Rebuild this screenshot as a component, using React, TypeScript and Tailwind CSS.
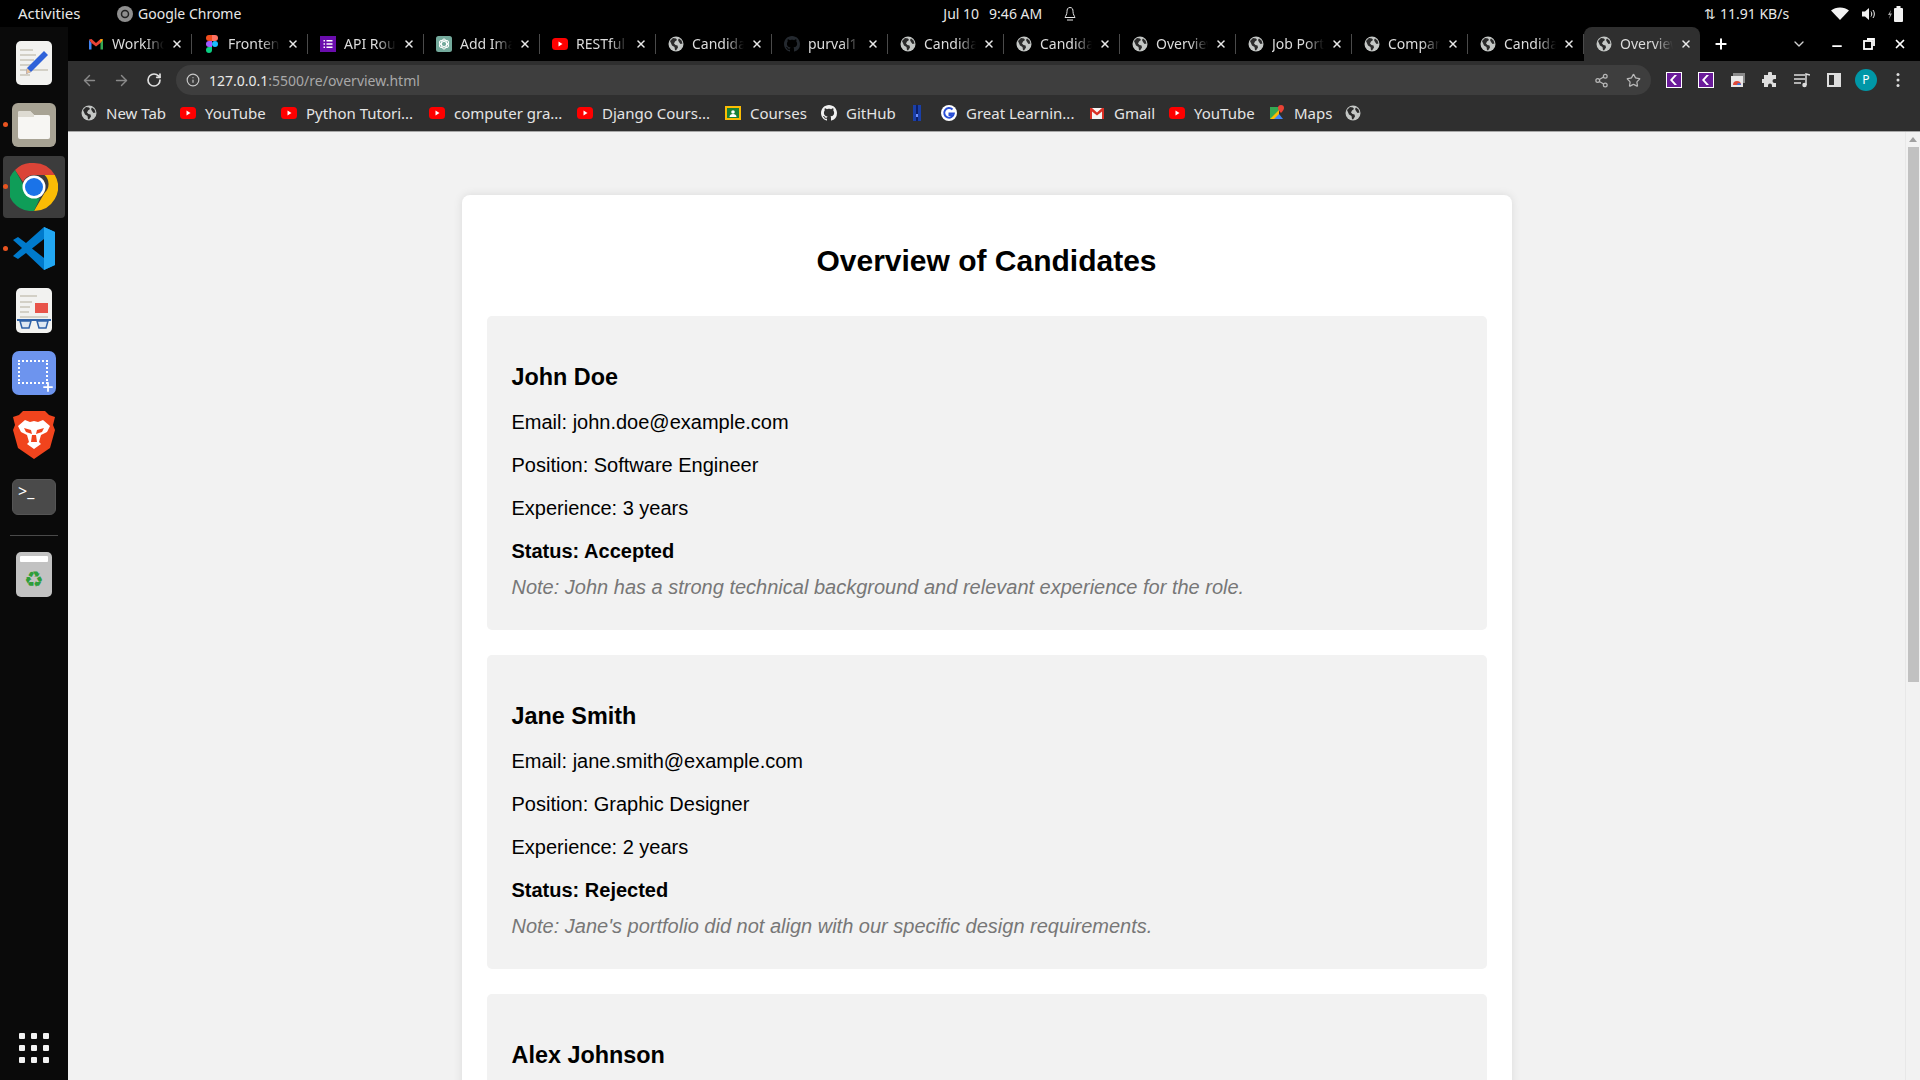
import { ArrowLeft, ArrowRight, ChevronDown, Info, Minus, Plus, RotateCw, Share2, Star, X } from "lucide-react";

const uiFont = "font-['Noto_Sans',sans-serif]";

function Globe({ className = "h-4 w-4" }: { className?: string }) {
  return (
    <svg viewBox="0 0 16 16" className={`${className} shrink-0`}>
      <circle cx="8" cy="8" r="7.5" fill="#c4c7c5" />
      <path d="M2 5l3-3 3 .5 1 1.500-2 1.500-1 2 1.500 1.500 2 .5.5 2-2 3-1-.5-.5-3-2.500-1.500zM11 2.500l2.500 2 1 3-2 .5-1.500-2-1-2z" fill="#2b2b2b" />
    </svg>
  );
}

function YouTubeIcon() {
  return (
    <svg viewBox="0 0 16 16" className="h-4 w-4 shrink-0">
      <rect x="0" y="2" width="16" height="12" rx="3.500" fill="#f00" />
      <path d="M6.500 5.500v5l4-2.500z" fill="#fff" />
    </svg>
  );
}

function GmailIcon() {
  return (
    <svg viewBox="0 0 16 16" className="h-4 w-4 shrink-0">
      <path d="M1 3.500v10h2.500V7z" fill="#4285f4" />
      <path d="M15 3.500v10h-2.500V7z" fill="#34a853" />
      <path d="M1 3.500 3.500 3 8 7l4.500-4 2.500.5L12.500 7 8 10.500 3.500 7z" fill="#ea4335" />
      <path d="M12.500 3 15 3.500 12.500 7z" fill="#fbbc04" />
    </svg>
  );
}

function GmailBookmark() {
  return (
    <svg viewBox="0 0 16 16" className="h-4 w-4 shrink-0">
      <rect x="1" y="3" width="14" height="11" fill="#f5f5f5" />
      <path d="M1 3h2l5 4.500L13 3h2v11h-2V6.500L8 10.500 3 6.500V14H1z" fill="#d93025" />
    </svg>
  );
}

function FigmaIcon() {
  return (
    <svg viewBox="0 0 12 18" className="h-[18px] w-3 shrink-0">
      <path d="M3 0h3v6H3a3 3 0 0 1 0-6z" fill="#f24e1e" />
      <path d="M6 0h3a3 3 0 0 1 0 6H6z" fill="#ff7262" />
      <path d="M3 6h3v6H3a3 3 0 0 1 0-6z" fill="#a259ff" />
      <circle cx="9" cy="9" r="3" fill="#1abcfe" />
      <path d="M3 12h3v3a3 3 0 1 1-3-3z" fill="#0acf83" />
    </svg>
  );
}

function ListIcon() {
  return (
    <svg viewBox="0 0 16 16" className="h-4 w-4 shrink-0">
      <rect width="16" height="16" fill="#6a0dad" />
      <path d="M3.500 4h1.500v1.500H3.500zM6.500 4h6v1.500h-6zM3.500 7.250h1.500v1.500H3.500zM6.500 7.250h6v1.500h-6zM3.500 10.500h1.500V12H3.500zM6.500 10.500h6V12h-6z" fill="#fff" />
    </svg>
  );
}

function GptIcon() {
  return (
    <svg viewBox="0 0 16 16" className="h-4 w-4 shrink-0">
      <rect width="16" height="16" rx="2.500" fill="#74aa9c" />
      <g fill="none" stroke="#fff" strokeWidth="1">
        <ellipse cx="8" cy="8" rx="2.500" ry="5" />
        <ellipse cx="8" cy="8" rx="2.500" ry="5" transform="rotate(60 8 8)" />
        <ellipse cx="8" cy="8" rx="2.500" ry="5" transform="rotate(120 8 8)" />
      </g>
    </svg>
  );
}

function GithubIcon({ fill }: { fill: string }) {
  return (
    <svg viewBox="0 0 16 16" className="h-4 w-4 shrink-0" fill={fill}>
      <path d="M8 0C3.580 0 0 3.580 0 8c0 3.540 2.290 6.530 5.470 7.590.4.070.55-.17.55-.38 0-.19-.01-.82-.01-1.490-2.010.37-2.530-.49-2.690-.94-.09-.23-.48-.94-.82-1.130-.28-.15-.68-.52-.01-.53.63-.01 1.080.58 1.230.82.720 1.210 1.870.87 2.330.66.070-.52.280-.87.510-1.070-1.780-.2-3.640-.89-3.640-3.950 0-.87.310-1.590.820-2.150-.08-.2-.36-1.020.08-2.120 0 0 .67-.21 2.200.82.640-.18 1.320-.27 2-.27s1.360.09 2 .27c1.530-1.040 2.200-.82 2.200-.82.440 1.100.160 1.920.080 2.120.510.560.820 1.270.820 2.150 0 3.070-1.870 3.750-3.650 3.950.290.250.540.730.540 1.480 0 1.070-.01 1.930-.01 2.200 0 .210.150.460.550.380A8.010 8.010 0 0 0 16 8c0-4.420-3.580-8-8-8z" />
    </svg>
  );
}

function CoursesIcon() {
  return (
    <svg viewBox="0 0 16 16" className="h-4 w-4 shrink-0">
      <rect x="0" y="1" width="16" height="14" fill="#fbbc04" />
      <rect x="2" y="3" width="12" height="10" fill="#188038" />
      <circle cx="8" cy="7" r="1.800" fill="#fff" />
      <path d="M4.500 12c0-2 1.500-3 3.500-3s3.500 1 3.500 3z" fill="#fff" />
    </svg>
  );
}

function BlueTabIcon() {
  return (
    <svg viewBox="0 0 16 16" className="h-4 w-4 shrink-0">
      <rect x="4" y="0" width="8" height="16" fill="#1a3fa8" />
      <rect x="7" y="0" width="2" height="16" fill="#0d1f66" />
      <rect x="7" y="9" width="2" height="3" fill="#6f8fff" />
    </svg>
  );
}

function GoogleIcon() {
  return (
    <svg viewBox="0 0 16 16" className="h-4 w-4 shrink-0">
      <circle cx="8" cy="8" r="8" fill="#fff" />
      <path d="M11.500 4.500A4.800 4.800 0 1 0 12.800 8.500H8.500v1.500h2.400" fill="none" stroke="#2a4fd6" strokeWidth="2" />
    </svg>
  );
}

function MapsIcon() {
  return (
    <svg viewBox="0 0 16 16" className="h-4 w-4 shrink-0">
      <path d="M1 2h9v12H1z" fill="#34a853" />
      <path d="M1 14 10 5v9z" fill="#fbbc04" />
      <path d="M5 14l5-5 4 5z" fill="#4285f4" />
      <path d="M12 0a3 3 0 0 1 3 3c0 2-3 5-3 5S9 5 9 3a3 3 0 0 1 3-3z" fill="#ea4335" />
    </svg>
  );
}

const tabs = [
  { label: "WorkIndia", icon: <GmailIcon /> },
  { label: "Frontend", icon: <FigmaIcon /> },
  { label: "API Routes", icon: <ListIcon /> },
  { label: "Add Image", icon: <GptIcon /> },
  { label: "RESTful API", icon: <YouTubeIcon /> },
  { label: "Candidates", icon: <Globe /> },
  { label: "purval1", icon: <GithubIcon fill="#24292f" /> },
  { label: "Candidates", icon: <Globe /> },
  { label: "Candidates", icon: <Globe /> },
  { label: "Overview", icon: <Globe /> },
  { label: "Job Portal", icon: <Globe /> },
  { label: "Company", icon: <Globe /> },
  { label: "Candidates", icon: <Globe /> },
  { label: "Overview", icon: <Globe />, active: true },
];

const bookmarks = [
  { label: "New Tab", icon: <Globe />, width: "w-[99px]" },
  { label: "YouTube", icon: <YouTubeIcon />, width: "w-[101px]" },
  { label: "Python Tutori...", icon: <YouTubeIcon />, width: "w-[148px]" },
  { label: "computer gra...", icon: <YouTubeIcon />, width: "w-[148px]" },
  { label: "Django Cours...", icon: <YouTubeIcon />, width: "w-[148px]" },
  { label: "Courses", icon: <CoursesIcon />, width: "w-[96px]" },
  { label: "GitHub", icon: <GithubIcon fill="#f1f1f1" />, width: "w-[88px]" },
  { label: "", icon: <BlueTabIcon />, width: "w-[32px]" },
  { label: "Great Learnin...", icon: <GoogleIcon />, width: "w-[148px]" },
  { label: "Gmail", icon: <GmailBookmark />, width: "w-[80px]" },
  { label: "YouTube", icon: <YouTubeIcon />, width: "w-[100px]" },
  { label: "Maps", icon: <MapsIcon />, width: "w-[76px]" },
  { label: "", icon: <Globe />, width: "w-[32px]" },
];

const candidates = [
  {
    name: "John Doe",
    email: "john.doe@example.com",
    position: "Software Engineer",
    experience: "3 years",
    status: "Accepted",
    note: "Note: John has a strong technical background and relevant experience for the role.",
  },
  {
    name: "Jane Smith",
    email: "jane.smith@example.com",
    position: "Graphic Designer",
    experience: "2 years",
    status: "Rejected",
    note: "Note: Jane's portfolio did not align with our specific design requirements.",
  },
];

function TopBar() {
  return (
    <div className={`flex h-[27px] shrink-0 items-center bg-black text-[14px] text-[#e8e8e8] ${uiFont}`}>
      <span className="ml-[18px] w-[99px] text-[15px]">Activities</span>
      <svg viewBox="0 0 16 16" className="mr-[2px] h-4 w-4">
        <circle cx="8" cy="8" r="8" fill="#8f8f8f" />
        <circle cx="8" cy="8" r="3.500" fill="none" stroke="#222" strokeWidth="1.500" />
      </svg>
      <span className="ml-[3px]">Google Chrome</span>
      <div className="ml-[702px] flex w-[127px] gap-[10px] whitespace-nowrap">
        <span>Jul 10</span>
        <span>9:46 AM</span>
      </div>
      <svg viewBox="0 0 16 16" className="ml-[-8px] h-4 w-4" fill="none" stroke="#e8e8e8" strokeWidth="1">
        <path d="M8 1.500c-2.500 0-3 2-3 4 0 3-1.500 4.500-2 6h10c-.5-1.500-2-3-2-6 0-2-.5-4-3-4zM5 14h6" />
      </svg>
      <span className="ml-[626px] whitespace-nowrap">⇅ 11.91 KB/s</span>
      <svg viewBox="0 0 18 16" className="ml-[42px] h-4 w-[18px]" fill="#f2f2f2">
        <path d="M9 14 0 4.500C2.500 2.500 5.500 1.500 9 1.500s6.500 1 9 3z" />
      </svg>
      <svg viewBox="0 0 16 16" className="ml-[12px] h-4 w-4" fill="#f2f2f2">
        <path d="M1 5.500h3L8 2v12l-4-3.500H1z" />
        <path d="M10 5.500c1 1.500 1 3.500 0 5M12 4c1.800 2.200 1.800 5.800 0 8" stroke="#f2f2f2" fill="none" />
      </svg>
      <svg viewBox="0 0 16 18" className="ml-[11px] h-[18px] w-4" fill="#f2f2f2">
        <path d="M3 5 0 10h2l-1 4 3-5.500H2z" fill="#aaa" />
        <rect x="6" y="3" width="9" height="14" rx="1" />
        <rect x="8.500" y="1" width="4" height="2" />
      </svg>
    </div>
  );
}

function Dock() {
  return (
    <aside className="relative flex w-[68px] shrink-0 flex-col items-center bg-[#0a0a0a]">
      {/* running app markers */}
      <span className="absolute left-[3px] top-[95px] h-[5px] w-[5px] rounded-full bg-[#e95420]" />
      <span className="absolute left-[3px] top-[157px] h-[5px] w-[5px] rounded-full bg-[#e95420]" />
      <span className="absolute left-[3px] top-[219px] h-[5px] w-[5px] rounded-full bg-[#e95420]" />

      <svg viewBox="0 0 36 44" className="mt-[14px] h-[44px] w-[36px]">
        <rect width="36" height="44" rx="5" fill="#f2f2f0" />
        <path d="M4 9h13M4 14h16M4 19h14M4 24h13M4 29h28M4 34h10" stroke="#c9c5b8" strokeWidth="1.500" />
        <path d="M28 10l4 4-17 17-5 2 1-6z" fill="#2f62d9" />
        <path d="M11 27l4 4-5 2z" fill="#e8c39a" />
      </svg>
      <div className="mt-[18px] flex h-[44px] w-[44px] items-center justify-center rounded-[6px] bg-[#a8a394]">
        <svg viewBox="0 0 32 28" className="h-[28px] w-[32px]">
          <path d="M0 2a2 2 0 0 1 2-2h10l4 4h14a2 2 0 0 1 2 2v20a2 2 0 0 1-2 2H2a2 2 0 0 1-2-2z" fill="#f7f6f3" />
          <path d="M0 6V2a2 2 0 0 1 2-2h10l4 4v2z" fill="#dedbd2" />
        </svg>
      </div>
      <div className="mt-[9px] flex h-[62px] w-[62px] items-center justify-center rounded-[4px] bg-[#3c3c3c]">
        <svg viewBox="0 0 48 48" className="h-[48px] w-[48px]">
          <path d="M24 0a24 24 0 0 1 20.800 12H24a12 12 0 0 0-11 7L5 7A24 24 0 0 1 24 0z" fill="#db4437" />
          <path d="M44.800 12A24 24 0 0 1 24 48l10.500-18a12 12 0 0 0 0-18z" fill="#fbbc05" />
          <path d="M5 7l11 19a12 12 0 0 0 14 9l-6 13A24 24 0 0 1 5 7z" fill="#0f9d58" />
          <circle cx="24" cy="24" r="11.500" fill="#fff" />
          <circle cx="24" cy="24" r="9" fill="#1a73e8" />
        </svg>
      </div>
      <svg viewBox="0 0 42 43" className="mt-[9px] h-[43px] w-[42px]">
        <path d="M31 0l11 5v33l-11 5-18-17-8 6-5-3 9-8-9-8 5-3 8 6z" fill="#007acc" />
        <path d="M31 0l11 5v33l-11 5z" fill="#22a7f2" />
        <path d="M31 12 19 21.500 31 31z" fill="#0a0a0a" />
      </svg>
      <svg viewBox="0 0 36 45" className="mt-[18px] h-[45px] w-[36px]">
        <rect width="36" height="45" rx="5" fill="#f2f2f0" />
        <path d="M4 8h17M4 14h12M4 19h10M4 24h9M4 29h28" stroke="#c9c5b8" strokeWidth="1.500" />
        <rect x="19" y="15" width="13" height="10" fill="#e8544a" />
        <path d="M1 32h34" stroke="#2f62a8" strokeWidth="2" />
        <path d="M4 33h11l-2 7H6zM21 33h11l-2 7h-7z" fill="#dfe8f2" stroke="#2f62a8" strokeWidth="1.500" />
      </svg>
      <div className="relative mt-[18px] h-[44px] w-[44px] rounded-[7px] bg-[#6d94ee]">
        <div className="absolute left-[6px] top-[9px] h-[24px] w-[30px] border-2 border-dotted border-white" />
        <Plus className="absolute bottom-[1px] right-[1px] h-[14px] w-[14px] text-white" strokeWidth={3} />
      </div>
      <svg viewBox="0 0 42 48" className="mt-[16px] h-[48px] w-[42px]">
        <path d="M10 0h22l4 4 6 2-2 8 2 5-5 18-16 11-16-11L0 19l2-5L0 6l6-2z" fill="#f1441d" />
        <path d="M5 15l7-6 5 2 4-1 4 1 5-2 7 6-3 6-6 3-2 7 2 2-7 5-7-5 2-2-2-7-6-3z" fill="#fff" />
        <path d="M11 17l7 2 1 4-6-2zM31 17l-7 2-1 4 6-2zM19 24h4l1 7h-6z" fill="#f1441d" />
      </svg>
      <div className={`mt-[20px] h-[36px] w-[44px] rounded-[6px] border border-[#555] bg-[#4a4a4a] pl-[5px] text-[16px] leading-[22px] text-white ${uiFont}`}>
        &gt;_
      </div>
      <div className="mt-[20px] h-px w-[48px] bg-[#4a4a4a]" />
      <div className="mt-[16px] flex h-[45px] w-[36px] flex-col items-center rounded-[5px] bg-[#c2c2c2]">
        <div className="mt-[4px] h-[6px] w-[28px] rounded-[1px] bg-white" />
        <span className="mt-[6px] text-[22px] leading-[24px] text-[#2e9e3a]">♻</span>
      </div>
      <div className="mt-[436px] grid w-[30px] grid-cols-3 gap-x-[6px] gap-y-[6px]">
        {Array.from({ length: 9 }).map((_, i) => (
          <span key={i} className="h-[6px] w-[6px] rounded-[1px] bg-[#f2f2f2]" />
        ))}
      </div>
    </aside>
  );
}

function TabStrip() {
  return (
    <div className={`flex h-[34px] shrink-0 items-stretch bg-black pl-[8px] text-[14px] text-[#dcdcdc] ${uiFont}`}>
      {tabs.map((tab, i) => (
        <div
          key={i}
          className={`flex w-[116px] shrink-0 items-center pb-[1px] pl-[12px] pr-[8px] ${tab.active ? "rounded-t-[8px] bg-[#2f2f2f]" : "my-[7px] border-r border-[#4a4a4a]"}`}
        >
          <span className="flex w-4 shrink-0 justify-center">{tab.icon}</span>
          <span className="ml-[8px] flex-1 overflow-hidden whitespace-nowrap [mask-image:linear-gradient(to_right,black_65%,transparent)]">
            {tab.label}
          </span>
          <X className="ml-[7px] h-[12px] w-[12px] shrink-0 text-[#e8e8e8]" strokeWidth={3} />
        </div>
      ))}
      <Plus className="ml-[13px] mt-[9px] h-[16px] w-[16px] text-white" strokeWidth={3} />
      <ChevronDown className="ml-[62px] mt-[9px] h-[16px] w-[16px] text-[#d0d0d0]" strokeWidth={2} />
      <Minus className="ml-[23px] mt-[12px] h-[14px] w-[14px] text-white" strokeWidth={3} />
      <svg viewBox="0 0 12 12" className="ml-[19px] mt-[11px] h-[12px] w-[12px]" fill="none" stroke="#fff" strokeWidth="1.800">
        <rect x="1" y="3" width="8" height="8" />
        <path d="M4 1h7v7" />
      </svg>
      <X className="ml-[18px] mt-[10px] h-[14px] w-[14px] text-white" strokeWidth={3} />
    </div>
  );
}

function Extension() {
  return (
    <svg viewBox="0 0 16 16" className="h-4 w-4">
      <rect x=".5" y=".5" width="15" height="15" fill="#6a1b9a" stroke="#fff" />
      <path d="M11 3 6.500 8l4.500 5H8.500L4 8l4.500-5z" fill="#fff" />
    </svg>
  );
}

function Toolbar() {
  return (
    <div className={`flex h-[38px] shrink-0 items-center bg-[#2f2f2f] ${uiFont}`}>
      <ArrowLeft className="ml-[13px] h-[17px] w-[17px] text-[#8a8a8a]" />
      <ArrowRight className="ml-[15px] h-[17px] w-[17px] text-[#8a8a8a]" />
      <RotateCw className="ml-[16px] h-[16px] w-[16px] text-[#e0e0e0]" strokeWidth={2.500} />
      <div className="ml-[14px] flex h-[30px] w-[1475px] items-center rounded-full bg-[#3e3e3e] text-[14px]">
        <Info className="ml-[10px] h-[14px] w-[14px] text-[#c8c8c8]" />
        <span className="ml-[9px] text-[#e8e8e8]">127.0.0.1</span>
        <span className="text-[#a8a8a8]">:5500/re/overview.html</span>
        <div className="ml-auto mr-[10px] flex items-center gap-[17px]">
          <Share2 className="h-[15px] w-[15px] text-[#b8b8b8]" />
          <Star className="h-[15px] w-[15px] text-[#b8b8b8]" />
        </div>
      </div>
      <div className="ml-[15px] flex items-center gap-[16px]">
        <Extension />
        <Extension />
        <svg viewBox="0 0 16 16" className="h-4 w-4">
          <rect x="3" y="1" width="12" height="10" fill="#8a8a8a" />
          <rect x="1" y="4" width="12" height="11" fill="#e8e8e8" />
          <path d="M3 13a4 4 0 0 1 8 0z" fill="#e04a3a" />
          <path d="M7 13a2 2 0 0 1 4 0z" fill="#3a76e0" />
        </svg>
        <svg viewBox="0 0 16 16" className="h-4 w-4" fill="#dedede">
          <path d="M6 1.500a2 2 0 0 1 4 0V3h4v4h-1.500a2 2 0 0 0 0 4H14v4H10v-1.500a2 2 0 0 0-4 0V15H2v-4H.5a2 2 0 0 1 0-4H2V3h4z" />
        </svg>
        <svg viewBox="0 0 16 16" className="h-4 w-4" fill="none" stroke="#dedede" strokeWidth="1.500">
          <path d="M0 3h11M0 7h11M0 11h7M12 13V2l4 1" />
          <circle cx="10.500" cy="13" r="1.500" fill="#dedede" />
        </svg>
        <svg viewBox="0 0 16 16" className="h-4 w-4">
          <rect x="1" y="1" width="14" height="14" fill="#dedede" />
          <rect x="3" y="3" width="5" height="10" fill="#2f2f2f" />
        </svg>
        <span className="ml-[-3px] flex h-[22px] w-[22px] items-center justify-center rounded-full bg-[#0097a7] text-[12px] text-white">P</span>
        <svg viewBox="0 0 4 16" className="ml-[3px] h-4 w-1" fill="#dedede">
          <circle cx="2" cy="2.500" r="1.500" />
          <circle cx="2" cy="8" r="1.500" />
          <circle cx="2" cy="13.500" r="1.500" />
        </svg>
      </div>
    </div>
  );
}

function BookmarksBar() {
  return (
    <div className={`flex h-[33px] shrink-0 items-center border-b border-[#a8a8a8] bg-[#2f2f2f] pb-[4px] pl-[13px] text-[15px] text-[#e4e4e4] ${uiFont}`}>
      {bookmarks.map((b, i) => (
        <div key={i} className={`flex shrink-0 items-center gap-[9px] whitespace-nowrap ${b.width}`}>
          {b.icon}
          {b.label && <span>{b.label}</span>}
        </div>
      ))}
    </div>
  );
}

function CandidateCard({ c }: { c: (typeof candidates)[number] }) {
  return (
    <div className="mb-[25px] rounded-[5px] bg-[#f2f2f2] px-[25px] pb-[31px] pt-[48px] text-[20px] leading-[23px] text-black">
      <h3 className="mb-[20px] text-[23.400px] font-bold leading-[27px]">{c.name}</h3>
      <p className="mb-[20px]">Email: {c.email}</p>
      <p className="mb-[20px]">Position: {c.position}</p>
      <p className="mb-[20px]">Experience: {c.experience}</p>
      <p className="mb-[13px] font-bold">Status: {c.status}</p>
      <p className="italic text-[#777]">{c.note}</p>
    </div>
  );
}

export default function App() {
  return (
    <div className="flex h-screen w-full flex-col overflow-hidden bg-black font-['Liberation_Sans',Arial,sans-serif]">
      <TopBar />
      <div className="flex min-h-0 flex-1">
        <Dock />
        <div className="flex min-w-0 flex-1 flex-col">
          <TabStrip />
          <Toolbar />
          <BookmarksBar />
          <div className="flex min-h-0 flex-1 bg-[#f2f2f2]">
            <main className="min-w-0 flex-1 overflow-hidden pt-[63px]">
              <div className="mx-auto w-[1050px] rounded-[8px] bg-white px-[25px] pt-[47px] shadow-[0_0_10px_rgba(0,0,0,0.1)]">
                <h1 className="mb-[37px] text-center text-[30px] font-bold leading-[37px] text-black">Overview of Candidates</h1>
                {candidates.map((c) => (
                  <CandidateCard key={c.name} c={c} />
                ))}
                <div className="h-[200px] rounded-[5px] bg-[#f2f2f2] px-[25px] pt-[48px]">
                  <h3 className="text-[23.400px] font-bold leading-[27px] text-black">Alex Johnson</h3>
                </div>
              </div>
            </main>
            {/* page scrollbar */}
            <div className="flex w-[15px] shrink-0 flex-col items-center border-l border-[#e8e8e8] bg-[#f2f2f2]">
              <span className="mt-[5px] h-0 w-0 border-x-[4px] border-b-[5px] border-x-transparent border-b-[#a0a0a0]" />
              <span className="mt-[5px] h-[535px] w-[11px] bg-[#c1c1c1]" />
            </div>
          </div>
        </div>
      </div>
    </div>
  );
}
